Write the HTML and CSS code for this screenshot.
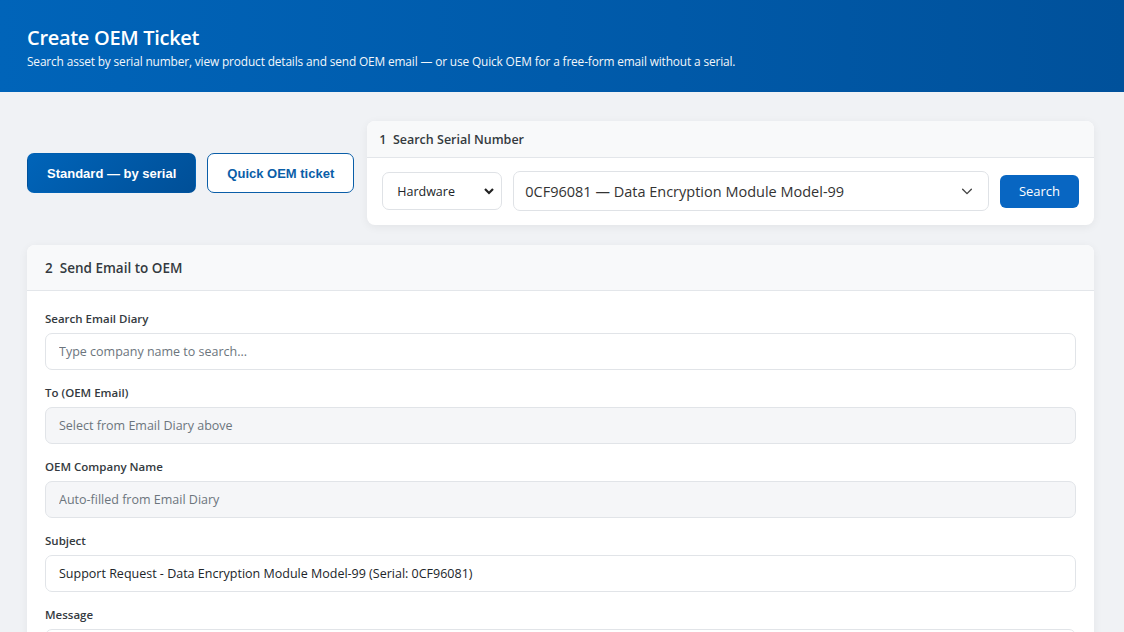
FILE: index.html
```html
<!DOCTYPE html>
<html lang="en">
<head>
    <meta charset="UTF-8">
    <meta name="viewport" content="width=device-width, initial-scale=1.0">
    <title>Create OEM Ticket</title>
    <link rel="stylesheet" href="styles.css">
</head>
<body>
    <header class="page-header">
        <h1>Create OEM Ticket</h1>
        <p>Search asset by serial number, view product details and send OEM email — or use Quick OEM for a free-form email without a serial.</p>
    </header>

    <main class="container">
        <div class="top-row">
            <div class="mode-switch">
                <button class="btn-mode active">Standard — by serial</button>
                <button class="btn-mode">Quick OEM ticket</button>
            </div>

            <section class="card card-search">
                <div class="card-header">1&nbsp; Search Serial Number</div>
                <div class="card-body search-body">
                    <select class="select-type">
                        <option>Hardware</option>
                        <option>Software</option>
                    </select>
                    <select class="select-serial">
                        <option>0CF96081 — Data Encryption Module Model-99</option>
                    </select>
                    <button class="btn-search">Search</button>
                </div>
            </section>
        </div>

        <section class="card card-email">
            <div class="card-header big">2&nbsp; Send Email to OEM</div>
            <div class="card-body">
                <div class="form-group">
                    <label for="diary">Search Email Diary</label>
                    <input type="text" id="diary" placeholder="Type company name to search...">
                </div>
                <div class="form-group">
                    <label for="toEmail">To (OEM Email)</label>
                    <input type="text" id="toEmail" class="readonly" placeholder="Select from Email Diary above" readonly>
                </div>
                <div class="form-group">
                    <label for="company">OEM Company Name</label>
                    <input type="text" id="company" class="readonly" placeholder="Auto-filled from Email Diary" readonly>
                </div>
                <div class="form-group">
                    <label for="subject">Subject</label>
                    <input type="text" id="subject" value="Support Request - Data Encryption Module Model-99 (Serial: 0CF96081)">
                </div>
                <div class="form-group">
                    <label for="message">Message</label>
                    <textarea id="message" rows="6"></textarea>
                </div>
            </div>
        </section>
    </main>
</body>
</html>
```

FILE: styles.css
```css
* {
    margin: 0;
    padding: 0;
    box-sizing: border-box;
}

body {
    background-color: #f0f2f5;
    font-family: 'Open Sans', 'Noto Sans', sans-serif;
    color: #212529;
}

.page-header {
    background: linear-gradient(90deg, #0064b9 0%, #0059a8 60%, #00519b 100%);
    color: #fff;
    height: 92px;
    padding: 24px 27px 0;
}

.page-header h1 {
    font-size: 20px;
    font-weight: 600;
    letter-spacing: -0.3px;
    margin-bottom: 2px;
}

.page-header p {
    font-size: 11.9px;
    letter-spacing: -0.15px;
    opacity: 0.95;
}

.container {
    padding: 29px 30px 0 27px;
}

.top-row {
    display: flex;
    align-items: center;
    gap: 13px;
    margin-bottom: 20px;
}

.mode-switch {
    display: flex;
    gap: 11px;
}

.btn-mode {
    font-family: 'Liberation Sans', Arial, sans-serif;
    font-size: 13px;
    font-weight: 700;
    height: 40px;
    padding: 0 19px;
    border-radius: 7px;
    border: 1px solid #0a5ea8;
    background: #fff;
    color: #0a5ea8;
    cursor: pointer;
}

.btn-mode.active {
    background: linear-gradient(135deg, #0064b9 0%, #004f97 100%);
    color: #fff;
    border-color: transparent;
}

.card {
    background: #fff;
    border-radius: 8px;
    box-shadow: 0 2px 10px rgba(0, 0, 0, 0.06);
    overflow: hidden;
}

.card-search {
    flex: 1;
}

.card-header {
    background: #f8f9fa;
    border-bottom: 1px solid #e3e6ea;
    height: 37px;
    padding: 0 12px;
    display: flex;
    align-items: center;
    font-size: 12.5px;
    font-weight: 600;
    color: #343a40;
}

.card-header.big {
    height: 46px;
    padding: 0 18px;
    font-size: 13.5px;
}

.search-body {
    display: flex;
    align-items: center;
    gap: 11px;
    padding: 13px 15px 14px;
}

select {
    appearance: none;
    font-family: inherit;
    color: #212529;
    background-color: #fff;
    border: 1px solid #dfe2e6;
    border-radius: 7px;
    background-repeat: no-repeat;
}

.select-type {
    width: 120px;
    height: 38px;
    font-size: 12.5px;
    padding: 0 14px;
    background-image: url("data:image/svg+xml,%3Csvg xmlns='http://www.w3.org/2000/svg' width='12' height='12' viewBox='0 0 12 12'%3E%3Cpath fill='none' stroke='%23222' stroke-width='2.2' d='M2 4l4 4 4-4'/%3E%3C/svg%3E");
    background-position: right 6px center;
}

.select-serial {
    flex: 1;
    height: 40px;
    font-size: 14.5px;
    padding: 0 11px;
    color: #333;
    background-image: url("data:image/svg+xml,%3Csvg xmlns='http://www.w3.org/2000/svg' width='14' height='14' viewBox='0 0 16 16'%3E%3Cpath fill='none' stroke='%23444' stroke-width='1.6' stroke-linecap='round' stroke-linejoin='round' d='M3 6l5 5 5-5'/%3E%3C/svg%3E");
    background-position: right 14px center;
}

.btn-search {
    background: #0866c2;
    color: #fff;
    border: none;
    border-radius: 6px;
    height: 33px;
    width: 79px;
    font-family: inherit;
    font-size: 13px;
    font-weight: 500;
    cursor: pointer;
}

.card-email .card-body {
    padding: 20px 18px 0;
}

.form-group {
    margin-bottom: 15px;
}

.form-group label {
    display: block;
    font-size: 11.5px;
    font-weight: 600;
    color: #343a40;
    margin-bottom: 7px;
}

input[type="text"],
textarea {
    width: 100%;
    height: 37px;
    padding: 0 13px;
    border: 1px solid #e1e4e8;
    border-radius: 7px;
    font-family: inherit;
    font-size: 12.5px;
    color: #212529;
    background: #fff;
}

input::placeholder {
    color: #6c757d;
}

input.readonly {
    background: #f5f6f8;
}

textarea {
    height: 120px;
    resize: vertical;
}
```
